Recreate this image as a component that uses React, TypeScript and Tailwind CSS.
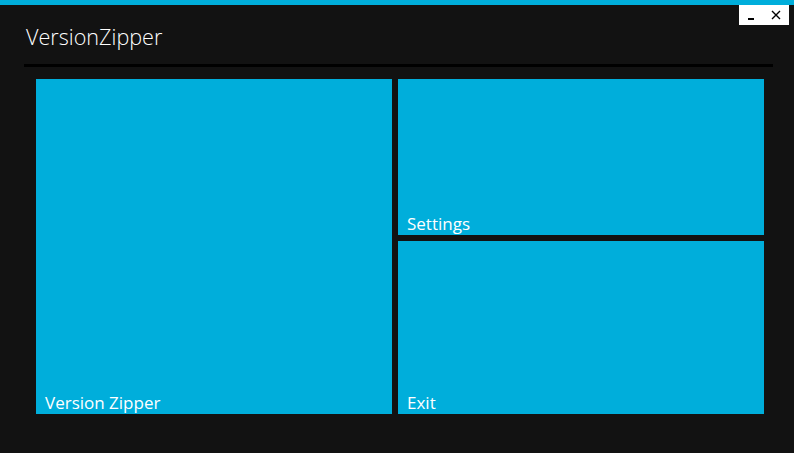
const Tile = ({ label, className }: { label: string; className: string }) => (
  <div className={`bg-[#00aedb] flex items-end px-[9px] pb-[1px] ${className}`}>
    <span className="text-white text-[17px] leading-[20px]">{label}</span>
  </div>
);

const App = () => {
  return (
    <div className="w-[794px] h-[453px] bg-[#121212] flex flex-col overflow-hidden" style={{ fontFamily: '"Open Sans", "Noto Sans", sans-serif' }}>
      {/* accent strip */}
      <div className="h-[5px] bg-[#00aedb]" />
      {/* header */}
      <div className="relative h-[59px] px-[24px] flex items-end">
        <h1 className="text-[21.6px] font-light text-white leading-[28px] pb-[13px] pl-[2px]">VersionZipper</h1>
        <div className="absolute top-0 left-[739px] w-[50px] h-[20px] bg-white flex items-center text-black">
          <span className="ml-[9px] mt-[7px] w-[6px] h-[2px] bg-black" />
          <svg className="ml-[17px]" width="10" height="10" viewBox="0 0 10 10">
            <path d="M1 1 L9 9 M9 1 L1 9" stroke="black" strokeWidth="1.4" />
          </svg>
        </div>
      </div>
      <div className="mx-[24px] w-[749px] h-[3px] bg-black" />
      {/* tiles */}
      <div className="flex gap-[6px] pl-[36px] pt-[12px]">
        <Tile label="Version Zipper" className="w-[356px] h-[335px]" />
        <div className="flex flex-col gap-[6px] w-[366px]">
          <Tile label="Settings" className="h-[156px]" />
          <Tile label="Exit" className="h-[173px]" />
        </div>
      </div>
    </div>
  );
};

export default App;
